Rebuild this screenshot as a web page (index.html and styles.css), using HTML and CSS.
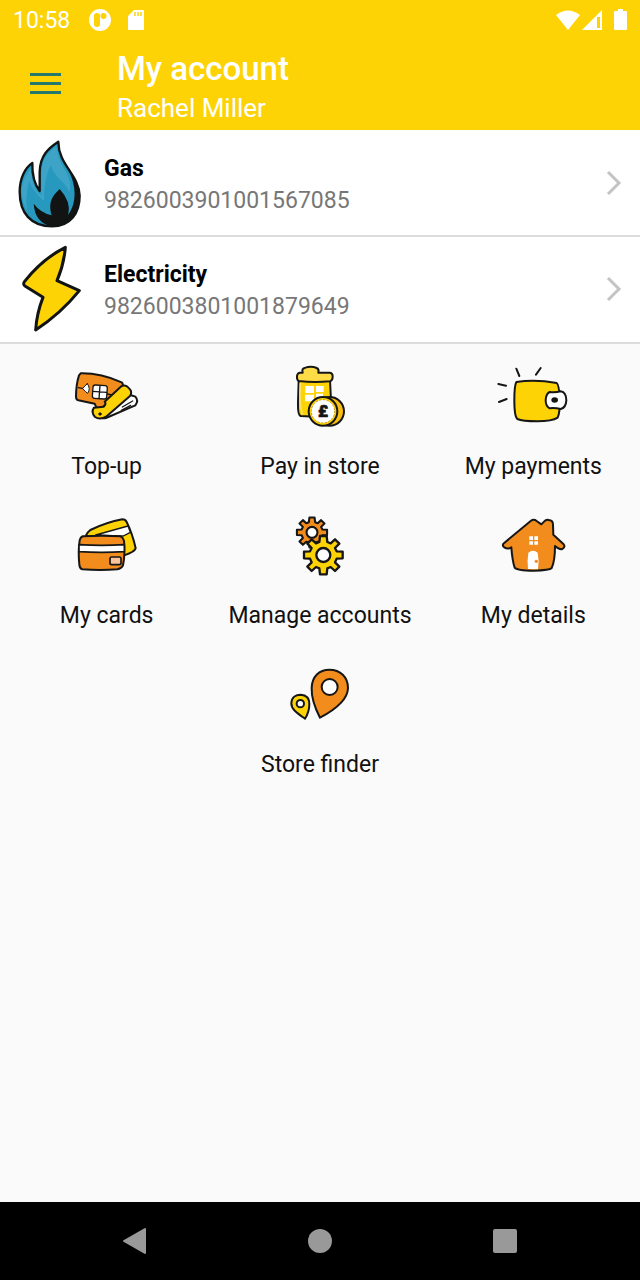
FILE: index.html
```html
<!DOCTYPE html>
<html lang="en">
<head>
    <meta charset="UTF-8">
    <meta name="viewport" content="width=device-width, initial-scale=1.0">
    <title>My account</title>
    <link rel="stylesheet" href="styles.css">
</head>
<body>
    <div class="status-bar">
        <span class="time">10:58</span>
        <svg class="status-icon" viewBox="0 0 24 24">
            <circle cx="12" cy="12" r="11" fill="#fff"/>
            <path d="M6 8q0-3 3-3t3 3v8q0 3-3 3t-3-3z" fill="#fed305"/>
            <path d="M7.500 8q0-1.500 1.500-1.500h2V16q0 2-1.800 2T7.500 16z" fill="#fed305"/>
            <circle cx="15.500" cy="8" r="3" fill="#fed305"/>
        </svg>
        <svg class="status-icon sd" viewBox="0 0 18 22">
            <path d="M7 1h9q1 0 1 1v18q0 1-1 1H2q-1 0-1-1V7z" fill="#fff"/>
            <path d="M8 3v4M11 3v4M14 3v4" stroke="#fed305" stroke-width="1.500"/>
        </svg>
        <!-- wifi, signal, battery -->
        <svg class="status-right" viewBox="0 0 75 24" fill="#fff">
            <path d="M1 7q12-9 24 0L13 22z"/>
            <path fill-rule="evenodd" d="M47 2v20H27zM42 9v11h3V9z"/>
            <path d="M63 1h5v2h3q1 0 1 1v17q0 1-1 1H60q-1 0-1-1V4q0-1 1-1h3z"/>
        </svg>
    </div>

    <header class="app-bar">
        <button class="menu-button" type="button" aria-label="Menu">
            <span></span><span></span><span></span>
        </button>
        <div>
            <h1>My account</h1>
            <p>Rachel Miller</p>
        </div>
    </header>

    <div class="accounts">
        <a class="account" href="#gas">
            <svg class="account-icon" viewBox="47 20 210 276">
                <path d="M177 34C148 53 122 75 121 125V182C105 161 98 139 99 98C76 113 61 146 61 184C61 247 94 288 158 288C214 288 241 248 241 196C239 133 177 104 177 34Z" fill="#2798be" stroke="#111412" stroke-width="7" stroke-linejoin="round"/>
                <path d="M171 48C146 66 127 86 126 126V196C108 180 96 157 94 116C77 136 66 160 67 186Q68 218 84 242Q76 204 89 152Q104 187 134 212Q132 150 154 104Q164 134 190 156Q204 170 210 186Q219 160 200 124Q174 86 171 48Z" fill="#3da4c8"/>
                <path d="M181 176C168 190 150 204 153 236Q154 250 157 255Q123 247 103 220Q107 279 158 287C216 287 241 248 240 196C239 163 223 140 207 120C229 160 235 215 207 253Q216 214 181 176Z" fill="#111412"/>
            </svg>
            <span class="account-text">
                <span class="account-name">Gas</span>
                <span class="account-number">9826003901001567085</span>
            </span>
            <svg class="chevron" viewBox="0 0 16 28"><path d="M2 3l11 11L2 25"/></svg>
        </a>
        <a class="account" href="#electricity">
            <svg class="account-icon" viewBox="47 20 210 276">
                <path d="M198 33Q130 67 76 135Q69 144 78 150L131 183Q112 231 109 281Q183 233 240 163L173 133Q194 84 198 33Z" fill="#fed305" stroke="#111412" stroke-width="9" stroke-linejoin="round"/>
            </svg>
            <span class="account-text">
                <span class="account-name">Electricity</span>
                <span class="account-number">9826003801001879649</span>
            </span>
            <svg class="chevron" viewBox="0 0 16 28"><path d="M2 3l11 11L2 25"/></svg>
        </a>
    </div>

    <main class="menu">
        <a class="menu-item" href="#top-up">
            <svg class="menu-icon" viewBox="5 0 270 225">
                <path d="M61 40Q121 39 184 67Q191 72 184 86L145 129Q134 134 130 139Q120 146 108 142L103 131L54 121Q47 119 47 110Q47 74 56 46Z" fill="#f28c1c"/>
                <path d="M54 83l15 3M140 102l17 3" stroke-width="4"/>
                <path d="M81 71q-9 7-14 15q8 9 15 14q10-14-1-29z" fill="#fff" stroke-width="3"/>
                <rect x="97" y="76" width="43" height="40" rx="7" fill="#fff" stroke-width="4" transform="rotate(4 118 96)"/>
                <path d="M119 77l-3 39M97 94l42 3" stroke-width="4"/>
                <path d="M210 105L225 110Q236 122 225 136L137 174Q124 177 119 171Z" fill="#fff"/>
                <path d="M217 123l-31 18M211 136l-28 15" stroke-width="4"/>
                <path d="M183 79Q191 74 201 80L209 88Q216 97 209 108L139 169Q119 181 104 171Q91 157 101 143L130 140Q139 132 133 125Z" fill="#fed305"/>
                <circle cx="119" cy="162" r="4" fill="#161616" stroke-width="2"/>
            </svg>
            <span>Top-up</span>
        </a>
        <a class="menu-item" href="#pay-in-store">
            <svg class="menu-icon" viewBox="-15 0 270 225">
                <path d="M56 63L150 60Q155 110 150 158Q143 170 121 171L62 168Q53 165 54 128Z" fill="#fed305"/>
                <path d="M68 38Q64 25 76 23Q94 17 110 24Q118 27 115 38L150 38Q158 39 158 49Q158 62 150 64Q102 69 56 63Q50 59 51 48Q52 40 59 38Z" fill="#fddc48"/>
                <path d="M61 71Q57 131 67 161" stroke="#fbe26b" stroke-width="5"/>
                <path d="M76 78h26v21H76zM108 78h23v18h-23zM75 104h27v20H75zM108 101h21v20h-21z" fill="#fff" stroke="none"/>
                <circle cx="149" cy="154" r="43" fill="#f8be10"/>
                <circle cx="129" cy="154" r="43" fill="#fed305"/>
                <circle cx="129" cy="154" r="35" fill="#fff" stroke="#c59922" stroke-width="3" stroke-dasharray="4 7"/>
                <text x="129" y="171" text-anchor="middle">£</text>
            </svg>
            <span>Pay in store</span>
        </a>
        <a class="menu-item" href="#payments">
            <svg class="menu-icon" viewBox="-5 0 270 225">
                <path d="M80 66Q137 57 201 69Q208 73 211 119Q211 157 204 173Q187 184 143 184Q98 184 83 177Q74 170 74 121Q74 77 80 66Z" fill="#fed305"/>
                <path d="M180 96Q198 98 213 94Q230 97 230 121Q229 143 213 147Q195 143 180 145Q168 139 168 121Q169 101 180 96Z" fill="#fff"/>
                <ellipse cx="195" cy="120" rx="10" ry="8" fill="#161616" stroke="none"/>
                <path d="M80 26l9 22M153 24l-14 20M26 72l23 5M28 126l23-9"/>
            </svg>
            <span>My payments</span>
        </a>
        <a class="menu-item" href="#cards">
            <svg class="menu-icon" viewBox="-10 -3 270 225">
                <path d="M62 76Q67 66 75 60Q123 37 171 28Q180 28 184 36Q202 73 211 115Q208 126 176 136L120 100Z" fill="#fed305"/>
                <path d="M91 75L188 48L195 67L174 78L160 78Z" fill="#fff" stroke-width="4"/>
                <path d="M53 79Q109 75 165 79Q173 82 176 92Q180 132 173 166Q168 176 156 178Q105 182 51 178Q43 176 42 164Q38 123 43 91Q46 81 53 79Z" fill="#f28c1c"/>
                <path d="M41 104Q109 108 177 104V125Q109 129 41 125Z" fill="#fff" stroke-width="5"/>
                <rect x="134" y="141" width="33" height="23" rx="5" fill="#fbc49a" stroke-width="5"/>
            </svg>
            <span>My cards</span>
        </a>
        <a class="menu-item" href="#manage">
            <svg class="menu-icon" viewBox="-15 -3 270 225">
                <g fill="#f28c1c" stroke-width="8" transform="translate(96 67) scale(.78)">
                    <path id="gear" d="M-12-39L-10-57H10L12-39L22-35L35-47L48-34L35-21L40-11L58-10V10L40 11L35 22L48 35L35 48L22 36L12 40L10 58H-10L-12 40L-22 36L-35 48L-48 35L-35 22L-40 11L-58 10V-10L-40-11L-35-21L-48-34L-35-47L-22-35Z"/>
                    <circle r="21" fill="#fff"/>
                </g>
                <g fill="#fed305" stroke-width="7" transform="translate(130 135)">
                    <use href="#gear"/>
                    <circle r="21" fill="#fff"/>
                </g>
            </svg>
            <span>Manage accounts</span>
        </a>
        <a class="menu-item" href="#details">
            <svg class="menu-icon" viewBox="-5 -3 270 225">
                <path d="M41 101L123 33Q132 26 141 33L155 43L163 35Q171 26 180 31Q190 32 190 44L191 74L222 103Q228 111 218 117Q209 120 196 108Q196 153 186 174Q180 181 132 182Q81 182 75 173Q68 152 65 112Q55 119 45 113Q37 108 41 101Z" fill="#f28c1c"/>
                <path d="M119 79h11v11h-11zM134 79h11v11h-11zM119 94h11v10h-11zM134 94h11v10h-11zM115 177Q112 152 116 128Q130 116 144 128Q149 151 145 178Z" fill="#fff" stroke="none"/>
                <circle cx="140" cy="154" r="5" fill="#f28c1c" stroke="none"/>
            </svg>
            <span>My details</span>
        </a>
        <a class="menu-item" href="#stores">
            <svg class="menu-icon" viewBox="-15 -6 270 225">
                <path d="M120 173C108 150 94 115 95 84C96 49 118 29 148 29C181 29 204 51 204 84C203 123 156 154 120 173Z" fill="#f28c1c"/>
                <circle cx="149" cy="81" r="24" fill="#fff"/>
                <path d="M75 176C52 160 33 148 34 129C35 112 47 104 62 104C79 105 88 115 88 132C88 150 82 165 75 176Z" fill="#fed305"/>
                <circle cx="61" cy="131" r="11" fill="#fff"/>
            </svg>
            <span>Store finder</span>
        </a>
    </main>

    <nav class="nav-bar">
        <button type="button" aria-label="Back">
            <svg viewBox="0 0 28 28"><path d="M24 2v24L3 14z" stroke="#999" stroke-width="2" stroke-linejoin="round"/></svg>
        </button>
        <button type="button" aria-label="Home">
            <svg viewBox="0 0 28 28"><circle cx="14" cy="14" r="12"/></svg>
        </button>
        <button type="button" aria-label="Recent apps">
            <svg viewBox="0 0 28 28"><rect x="2" y="2" width="24" height="24" rx="2"/></svg>
        </button>
    </nav>
</body>
</html>
```
FILE: styles.css
```css
* {
    box-sizing: border-box;
}
body {
    margin: 0;
    min-height: 100vh;
    display: flex;
    flex-direction: column;
    background-color: #fafafa;
    font-family: Roboto, sans-serif;
    font-size: 23px;
    color: #111;
}
a {
    color: inherit;
    text-decoration: none;
}
button {
    border: none;
    background: none;
    padding: 0;
    cursor: pointer;
}

/* status bar */
.status-bar {
    display: flex;
    align-items: center;
    height: 40px;
    padding: 0 10px 0 13px;
    background-color: #fed305;
    color: #fff;
}
.time {
    margin-right: 18px;
}
.status-icon {
    width: 24px;
    height: 24px;
}
.status-icon.sd {
    width: 18px;
    height: 22px;
    margin-left: 15px;
}
.status-right {
    width: 75px;
    height: 24px;
    margin-left: auto;
}

/* header */
.app-bar {
    display: flex;
    align-items: center;
    gap: 56px;
    height: 90px;
    padding: 4px 30px 0;
    background-color: #fed305;
    color: #fff;
}
.app-bar h1 {
    margin: 0;
    font-size: 33px;
    font-weight: 500;
    line-height: 42px;
}
.app-bar p {
    margin: 0;
    font-size: 26px;
    line-height: 36px;
}
.menu-button {
    display: flex;
    flex-direction: column;
    gap: 6px;
    width: 31px;
    margin-bottom: 8px;
}
.menu-button span {
    height: 3px;
    background-color: #24786c;
}

/* accounts */
.accounts {
    padding-bottom: 2px;
    background-color: #fff;
    border-bottom: 2px solid #dcdcdc;
}
.account {
    display: flex;
    align-items: center;
    height: 105px;
    padding: 0 18px 0 15px;
}
.account + .account {
    border-top: 2px solid #dcdcdc;
}
.account-icon {
    width: 70px;
    height: 92px;
}
.account-text {
    flex: 1;
    margin-left: 19px;
    padding-top: 4px;
    line-height: 32px;
}
.account-name,
.account-number {
    display: block;
}
.account-name {
    color: #000;
    font-weight: 700;
}
.account-number {
    color: #777;
}
.chevron {
    width: 16px;
    height: 28px;
    fill: none;
    stroke: #c4c4c4;
    stroke-width: 3;
}

/* menu */
.menu {
    flex: 1;
    display: flex;
    flex-wrap: wrap;
    justify-content: center;
    align-content: flex-start;
}
.menu-item {
    display: flex;
    flex-direction: column;
    align-items: center;
    width: calc(100% / 3);
    padding: 16px 0 11px;
    line-height: 30px;
    white-space: nowrap;
}
.menu-icon {
    width: 90px;
    height: 75px;
    margin-bottom: 17px;
    fill: none;
    stroke: #161616;
    stroke-width: 6;
    stroke-linecap: round;
    stroke-linejoin: round;
}
.menu-icon text {
    font-size: 50px;
    font-weight: 900;
    fill: #161616;
    stroke: #161616;
    stroke-width: 2;
}

/* navigation bar */
.nav-bar {
    display: flex;
    height: 78px;
    padding: 0 42px;
    background-color: #000;
}
.nav-bar button {
    flex: 1;
}
.nav-bar svg {
    width: 28px;
    height: 28px;
    fill: #999;
    vertical-align: middle;
}
```
